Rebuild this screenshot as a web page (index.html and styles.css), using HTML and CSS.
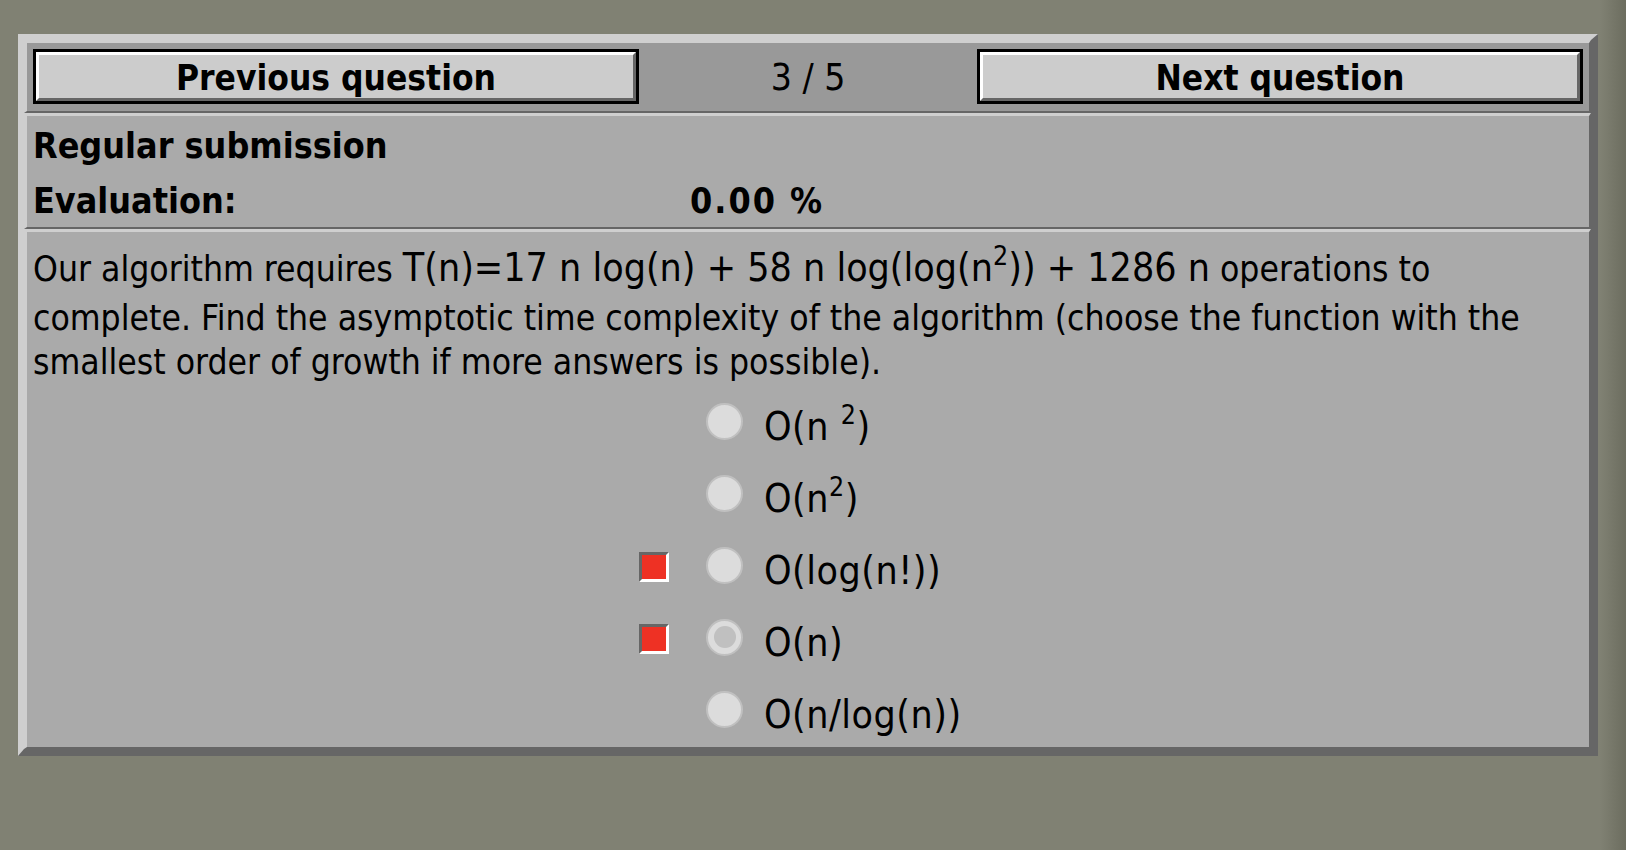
FILE: index.html
```html
<!DOCTYPE html>
<html lang="en">
<head>
<meta charset="utf-8">
<title>Question 3 / 5</title>
<link rel="stylesheet" href="styles.css">
</head>
<body>
<div class="frame">
  <div class="cell nav">
    <div class="btn-wrap"><div class="btn">Previous question</div></div>
    <div class="counter">3 / 5</div>
    <div class="btn-wrap"><div class="btn">Next question</div></div>
  </div>
  <div class="cell info">
    <div class="info-line">Regular submission</div>
    <div class="info-line eval"><span>Evaluation:</span><span class="value">0.00 %</span></div>
  </div>
  <div class="cell question">
    <p class="q-text">Our algorithm requires <span class="m">T(n)=17 n log(n) + 58 n log(log(n<sup>2</sup>)) + 1286 n</span> operations to complete. Find the asymptotic time complexity of the algorithm (choose the function with the smallest order of growth if more answers is possible).</p>
    <div class="options">
      <div class="opt"><span class="mark"></span><span class="radio"></span><span class="label m">O(n <sup>2</sup>)</span></div>
      <div class="opt"><span class="mark"></span><span class="radio"></span><span class="label m">O(n<sup>2</sup>)</span></div>
      <div class="opt"><span class="mark wrong"></span><span class="radio"></span><span class="label m">O(log(n!))</span></div>
      <div class="opt"><span class="mark wrong"></span><span class="radio checked"></span><span class="label m">O(n)</span></div>
      <div class="opt"><span class="mark"></span><span class="radio"></span><span class="label m">O(n/log(n))</span></div>
    </div>
  </div>
</div>
</body>
</html>
```

FILE: styles.css
```css
html, body {
  margin: 0;
  padding: 0;
}
body {
  width: 1626px;
  height: 850px;
  background: linear-gradient(to right, #808173 0, #808173 1600px, #6c6d5f 1626px);
  font-family: "DejaVu Sans Condensed", "DejaVu Sans", sans-serif;
  font-stretch: condensed;
  color: #000;
  overflow: hidden;
}
.frame {
  box-sizing: border-box;
  width: 1580px;
  margin: 34px 0 0 18px;
  border-style: solid;
  border-width: 6px 7px 7px 6px;
  border-color: #cfcfcf #666666 #666666 #cfcfcf;
  display: flex;
  flex-direction: column;
}
.cell {
  border-style: solid;
  border-width: 3px 2px 2px 3px;
  border-color: #cfcfcf #666666 #666666 #cfcfcf;
}
.nav {
  background: #999999;
  padding: 6px 6px 7px 6px;
  display: grid;
  grid-template-columns: 606px 1fr 606px;
}
.btn-wrap {
  border: 3px solid #000;
}
.btn {
  box-sizing: border-box;
  height: 49px;
  border-style: solid;
  border-width: 3px;
  border-color: #ffffff #666666 #666666 #ffffff;
  background: #cccccc;
  padding-top: 4px;
  font-weight: bold;
  font-size: 35px;
  line-height: 39px;
  text-align: center;
}
.counter {
  text-align: center;
  font-size: 37px;
  padding-top: 2px;
  line-height: 53px;
}
.info {
  background: #aaaaaa;
  padding: 2px 6px 0 6px;
}
.info-line {
  height: 55px;
  line-height: 55px;
  font-weight: bold;
  font-size: 35.6px;
  white-space: nowrap;
}
.info-line.eval {
  height: 54px;
  display: grid;
  grid-template-columns: 657px 1fr;
}
.value {
  letter-spacing: 2px;
}
.question {
  background: #aaaaaa;
  padding: 8px 6px 1px 6px;
}
.q-text {
  margin: 0;
  max-width: 1540px;
  font-size: 35.2px;
  line-height: 43.3px;
}
.m {
  font-size: 39px;
}
.q-text .m {
  line-height: 56.3px;
}
.m sup {
  font-size: 0.68em;
  line-height: 0;
  vertical-align: 16px;
}
.options {
  margin: 3px 0 0 606px;
  display: flex;
  flex-direction: column;
}
.opt {
  height: 72px;
  display: grid;
  grid-template-columns: 30px 37px 1fr;
  column-gap: 37px;
  align-items: start;
}
.opt .label {
  margin-left: -16px;
  margin-top: 11px;
  line-height: 60px;
  letter-spacing: 0.5px;
  white-space: nowrap;
}
.mark {
  width: 30px;
  height: 30px;
  margin-top: 22px;
}
.mark.wrong {
  box-sizing: border-box;
  border-style: solid;
  border-width: 3px;
  border-color: #666666 #ffffff #ffffff #666666;
  background: #ee3124;
}
.radio {
  box-sizing: border-box;
  width: 37px;
  height: 37px;
  margin-top: 17px;
  border-radius: 50%;
  background: #dcdcdc;
  border: 2px solid #c0c0c0;
  position: relative;
}
.radio.checked::after {
  content: "";
  position: absolute;
  left: 50%;
  top: 50%;
  width: 22px;
  height: 22px;
  margin: -11px 0 0 -11px;
  border-radius: 50%;
  background: #c0c0c0;
}
```
